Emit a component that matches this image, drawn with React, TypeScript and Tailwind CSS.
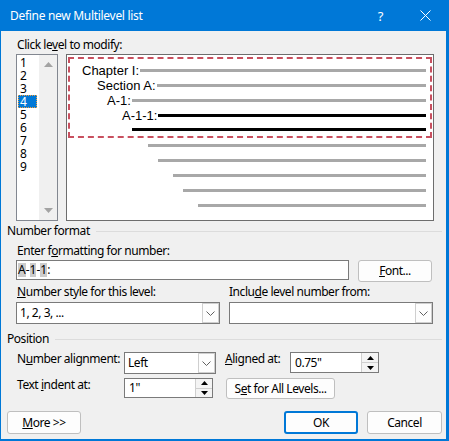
import React from "react";

function Chevron() {
  return (
    <svg width="9" height="5" viewBox="0 0 9 5" className="block">
      <path d="M0.5 0.5 L4.5 4.5 L8.5 0.5" fill="none" stroke="#606060" strokeWidth="1" />
    </svg>
  );
}

function Select({ value, className }: { value?: string; className: string }) {
  return (
    <div className={`flex border border-[#7a7a7a] bg-white ${className}`}>
      <div className="flex-1 pl-[3px] flex items-center">{value}</div>
      <div className="w-[17px] border border-[#cfcfcf] bg-[#fdfdfd] flex items-center justify-center">
        <Chevron />
      </div>
    </div>
  );
}

function Spin({ value, className }: { value: string; className: string }) {
  return (
    <div className={`flex border border-[#7a7a7a] bg-white ${className}`}>
      <div className="flex-1 pl-[4px] flex items-center">{value}</div>
      <div className="w-[17px] flex flex-col border-l border-[#cfcfcf]">
        <div className="flex-1 flex items-center justify-center bg-[#f4f4f4] border-b border-[#cfcfcf]">
          <svg width="7" height="4" viewBox="0 0 7 4">
            <path d="M0 4 L3.5 0 L7 4 Z" fill="#000" />
          </svg>
        </div>
        <div className="flex-1 flex items-center justify-center bg-[#f4f4f4]">
          <svg width="7" height="4" viewBox="0 0 7 4">
            <path d="M0 0 L3.5 4 L7 0 Z" fill="#000" />
          </svg>
        </div>
      </div>
    </div>
  );
}

function Btn({ children, className }: { children: React.ReactNode; className: string }) {
  return (
    <div
      className={`flex items-center justify-center rounded-[3px] border border-[#bfbfbf] bg-[#fdfdfd] ${className}`}
    >
      {children}
    </div>
  );
}

function Line({ black }: { black?: boolean }) {
  return <div className={`flex-1 h-[3px] ${black ? "bg-black" : "bg-[#a8a8a8]"}`} />;
}

export default function App() {
  const levels = ["1", "2", "3", "4", "5", "6", "7", "8", "9"];
  return (
    <div className="w-[449px] h-[441px] bg-[#0078d7] pl-[1px] pr-[3px] pb-[2px] flex flex-col text-[12px] leading-[16px] tracking-[-0.45px] text-black font-['Noto_Sans',sans-serif]">
      {/* Title bar */}
      <div className="h-[31px] flex items-center text-white shrink-0">
        <span className="ml-[9px] text-[12px] tracking-[-0.3px]">Define new Multilevel list</span>
        <span className="ml-auto text-[13px]">?</span>
        <svg width="11" height="11" viewBox="0 0 11 11" className="ml-[37px] mr-[15px]">
          <path d="M0.5 0.5 L10.5 10.5 M10.5 0.5 L0.5 10.5" stroke="#fff" strokeWidth="1" />
        </svg>
      </div>

      <div className="flex-1 bg-[#f0f0f0] flex flex-col">
        <div className="mt-[6px] ml-[16px]">
          Click le<span className="underline">v</span>el to modify:
        </div>

        <div className="mt-[1px] flex">
          {/* Level list */}
          <div className="ml-[15px] w-[42px] h-[167px] border border-[#828790] bg-white flex">
            <div className="w-[22px] pt-[1px] leading-[13px]">
              {levels.map((l) =>
                l === "4" ? (
                  <div key={l} className="ml-[1px] w-[19px] h-[13px] bg-[#0078d7] text-white pl-[2px] outline-1 outline-dotted outline-[#f0a040] -outline-offset-1">
                    {l}
                  </div>
                ) : (
                  <div key={l} className="h-[13px] pl-[3px]">
                    {l}
                  </div>
                )
              )}
            </div>
            <div className="flex-1 bg-[#f0f0f0] flex flex-col items-center justify-between py-[7px]">
              <svg width="9" height="5" viewBox="0 0 9 5">
                <path d="M0 5 L4.5 0 L9 5 Z" fill="#a3a3a3" />
              </svg>
              <svg width="9" height="5" viewBox="0 0 9 5">
                <path d="M0 0 L4.5 5 L9 0 Z" fill="#a3a3a3" />
              </svg>
            </div>
          </div>

          {/* Preview */}
          <div className="ml-[8px] w-[368px] h-[167px] border border-[#6d6d6d] bg-white pt-[2px] pl-[1px] pr-[1px] font-['Liberation_Sans',Arial,sans-serif] text-[13px] leading-[15px] tracking-normal">
            <div className="border-2 border-dashed border-[#c8505f] pt-[4px]">
              <div className="h-[15px] flex items-center pl-[12px] pr-[4px]">
                <span className="mr-[1px]">Chapter I:</span>
                <Line />
              </div>
              <div className="h-[15px] flex items-center pl-[27px] pr-[4px]">
                <span className="mr-[1px]">Section A:</span>
                <Line />
              </div>
              <div className="h-[15px] flex items-center pl-[37px] pr-[4px]">
                <span className="mr-[1px]">A-1:</span>
                <Line />
              </div>
              <div className="h-[15px] flex items-center pl-[52px] pr-[4px]">
                <span className="mr-[1px]">A-1-1:</span>
                <Line black />
              </div>
              <div className="h-[13px] flex items-center pl-[62px] pr-[4px]">
                <Line black />
              </div>
            </div>
            <div className="h-[15px] flex items-center pl-[80px] pr-[6px]">
              <Line />
            </div>
            <div className="h-[15px] flex items-center pl-[90px] pr-[6px]">
              <Line />
            </div>
            <div className="h-[15px] flex items-center pl-[105px] pr-[6px]">
              <Line />
            </div>
            <div className="h-[15px] flex items-center pl-[115px] pr-[6px]">
              <Line />
            </div>
            <div className="h-[15px] flex items-center pl-[130px] pr-[6px]">
              <Line />
            </div>
          </div>
        </div>

        {/* Number format */}
        <div className="mt-[2px] ml-[6px] mr-[4px] flex items-center">
          <span>Number format</span>
          <div className="flex-1 h-px bg-[#dcdcdc] ml-[6px]" />
        </div>
        <div className="mt-[4px] ml-[16px]">
          Enter f<span className="underline">o</span>rmatting for number:
        </div>
        <div className="mt-[1px] flex items-start">
          <div className="ml-[15px] w-[333px] h-[20px] border border-[#7a7a7a] bg-white flex items-center pl-[1px] leading-[14px] tracking-normal">
            <span className="bg-[#cccccc]">A</span>-<span className="bg-[#cccccc]">1</span>-
            <span className="bg-[#cccccc]">1</span>:
          </div>
          <Btn className="ml-[9px] w-[74px] h-[22px]">
            <span>
              <span className="underline">F</span>ont...
            </span>
          </Btn>
        </div>
        <div className="mt-[2px] flex">
          <div className="ml-[16px] w-[212px]">
            <span className="underline">N</span>umber style for this level:
          </div>
          <div>
            Inclu<span className="underline">d</span>e level number from:
          </div>
        </div>
        <div className="mt-[2px] flex">
          <Select value="1, 2, 3, ..." className="ml-[15px] w-[204px] h-[22px]" />
          <Select className="ml-[9px] w-[204px] h-[22px]" />
        </div>

        {/* Position */}
        <div className="mt-[7px] ml-[6px] mr-[4px] flex items-center">
          <span>Position</span>
          <div className="flex-1 h-px bg-[#dcdcdc] ml-[6px]" />
        </div>
        <div className="mt-[5px] flex items-start leading-[14px]">
          <div className="ml-[16px] w-[107px] whitespace-nowrap">
            N<span className="underline">u</span>mber alignment:
          </div>
          <Select value="Left" className="w-[92px] h-[22px]" />
          <div className="ml-[9px] w-[65px] whitespace-nowrap">
            <span className="underline">A</span>ligned at:
          </div>
          <Spin value={'0.75"'} className="w-[89px] h-[21px]" />
        </div>
        <div className="mt-[4px] flex items-start leading-[14px]">
          <div className="ml-[16px] w-[107px] whitespace-nowrap">
            Text <span className="underline">i</span>ndent at:
          </div>
          <Spin value={'1"'} className="w-[89px] h-[20px]" />
          <Btn className="ml-[13px] w-[109px] h-[21px]">
            <span>
              S<span className="underline">e</span>t for All Levels...
            </span>
          </Btn>
        </div>

        {/* Buttons */}
        <div className="mt-[12px] flex">
          <Btn className="ml-[6px] w-[74px] h-[23px]">
            <span>
              <span className="underline">M</span>ore &gt;&gt;
            </span>
          </Btn>
          <Btn className="ml-auto w-[74px] h-[23px] !border-2 !border-[#0078d7]">OK</Btn>
          <Btn className="ml-[9px] mr-[4px] w-[75px] h-[23px]">Cancel</Btn>
        </div>
      </div>
    </div>
  );
}
